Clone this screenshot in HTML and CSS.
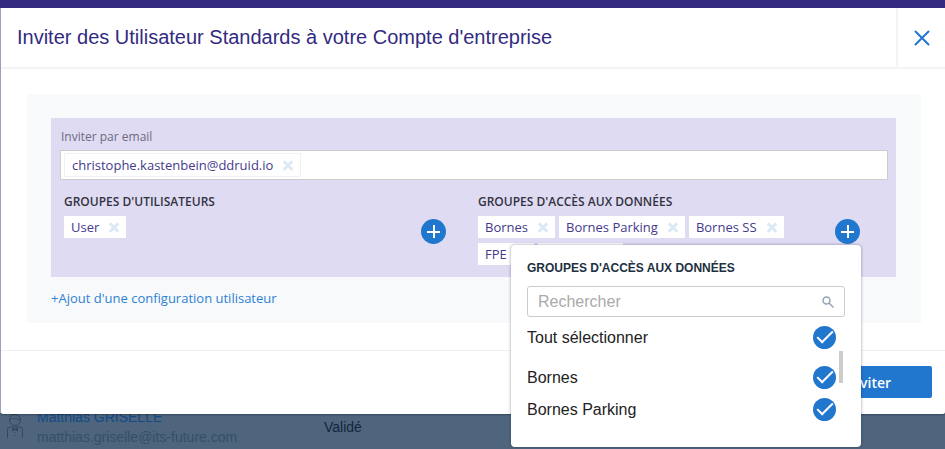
FILE: index.html
```html
<!DOCTYPE html>
<html lang="fr">
<head>
    <meta charset="UTF-8">
    <meta name="viewport" content="width=device-width, initial-scale=1.0">
    <title>Inviter des Utilisateurs</title>
    <link rel="stylesheet" href="styles.css">
</head>
<body>
    <div class="topbar"></div>

    <div class="user-row">
        <svg class="user-icon" width="18" height="26" viewBox="0 0 18 26" fill="none" stroke="currentColor">
            <circle cx="9" cy="7" r="5.5"/>
            <path d="M4 7c2-3 4 0 6-2 1 2 3 1 4 2M1.500 25v-8c0-2 1-3 3-3h9c2 0 3 1 3 3v8M9 19v1M9 22v1"/>
            <path d="M6.500 15v3L9 16.500l2.500 1.500v-3L9 16.500z" fill="currentColor"/>
        </svg>
        <div class="user-info">
            <a href="#" class="user-name">Matthias GRISELLE</a>
            <span class="user-email">matthias.griselle@its-future.com</span>
        </div>
        <span class="user-status">Validé</span>
    </div>

    <div class="modal" role="dialog" aria-labelledby="modalTitle">
        <div class="modal-header">
            <h1 id="modalTitle">Inviter des Utilisateur Standards à votre Compte d'entreprise</h1>
            <button class="close" aria-label="Fermer">
                <svg width="16" height="16" viewBox="0 0 16 16" stroke="currentColor" stroke-width="2" stroke-linecap="round"><path d="M1.500 1.500l13 13M14.500 1.500l-13 13"/></svg>
            </button>
        </div>

        <div class="modal-body">
            <div class="panel">
                <div class="card">
                    <label class="email-label" for="email">Inviter par email</label>
                    <div class="email-box">
                        <span class="tag tag-email">christophe.kastenbein@ddruid.io <button class="remove" aria-label="Retirer"></button></span>
                        <input type="text" id="email">
                    </div>
                    <div class="groups">
                        <div class="group">
                            <h2>GROUPES D'UTILISATEURS</h2>
                            <div class="group-row">
                                <div class="tags">
                                    <span class="tag">User <button class="remove" aria-label="Retirer"></button></span>
                                </div>
                                <button class="add" aria-label="Ajouter"></button>
                            </div>
                        </div>
                        <div class="group">
                            <h2>GROUPES D'ACCÈS AUX DONNÉES</h2>
                            <div class="group-row">
                                <div class="tags">
                                    <span class="tag">Bornes <button class="remove" aria-label="Retirer"></button></span>
                                    <span class="tag">Bornes Parking <button class="remove" aria-label="Retirer"></button></span>
                                    <span class="tag">Bornes SS <button class="remove" aria-label="Retirer"></button></span>
                                    <span class="tag">FPE <button class="remove" aria-label="Retirer"></button></span>
                                    <input type="text" class="tag-input" aria-label="Ajouter un groupe">
                                </div>
                                <button class="add" aria-label="Ajouter"></button>
                            </div>

                            <div class="popover">
                                <h3>GROUPES D'ACCÈS AUX DONNÉES</h3>
                                <div class="search">
                                    <input type="text" placeholder="Rechercher" aria-label="Rechercher">
                                    <svg width="12" height="12" viewBox="0 0 12 12" fill="none" stroke="currentColor" stroke-width="1.500"><circle cx="4.500" cy="4.500" r="3.500"/><path d="M7 7l4.500 4.500"/></svg>
                                </div>
                                <label class="option option-all">Tout sélectionner <input type="checkbox" checked></label>
                                <div class="options">
                                    <label class="option">Bornes <input type="checkbox" checked></label>
                                    <label class="option">Bornes Parking <input type="checkbox" checked></label>
                                    <div class="scroll-thumb"></div>
                                </div>
                            </div>
                        </div>
                    </div>
                </div>
                <a href="#" class="add-config">+Ajout d'une configuration utilisateur</a>
            </div>
        </div>

        <div class="modal-footer">
            <button class="invite">Inviter</button>
        </div>
    </div>
</body>
</html>
```
FILE: styles.css
```css
*, *::before, *::after {
    box-sizing: border-box;
}
body {
    margin: 0;
    min-height: 100vh;
    display: flex;
    flex-direction: column;
    justify-content: space-between;
    position: relative;
    overflow: hidden;
    background-color: #a9b0c6;
    font-family: "Liberation Sans", Arial, sans-serif;
    color: #222a35;
}
h1, h2, h3 {
    margin: 0;
}
button {
    border: none;
    padding: 0;
    cursor: pointer;
}
a {
    text-decoration: none;
}
.topbar {
    height: 8px;
    background-color: #322b80;
}

/* list behind the modal */
.user-row {
    display: flex;
    align-items: flex-end;
    height: 36px;
    padding: 0 6px 2px;
    background-color: #4e657d;
    font-size: 14px;
    line-height: 20px;
}
.user-icon {
    margin-bottom: 8px;
    color: #34495f;
}
.user-info {
    display: flex;
    flex-direction: column;
    width: 300px;
    padding-left: 13px;
}
.user-name {
    color: #134a85;
}
.user-email {
    color: #35506b;
}
.user-status {
    padding-bottom: 10px;
    color: #13253c;
}

.modal {
    position: absolute;
    top: 8px;
    left: 1px;
    right: 0;
    background-color: #fff;
    border-radius: 0 0 2px 2px;
    box-shadow: 0 1px 2px rgba(0, 0, 0, 0.3);
}
.modal-header {
    display: flex;
    justify-content: space-between;
    height: 61px;
    border-bottom: 2px solid #f4f4f5;
}
.modal-header h1 {
    padding-left: 16px;
    font-size: 20px;
    font-weight: normal;
    line-height: 59px;
    color: #322b80;
}
.close {
    display: flex;
    align-items: center;
    justify-content: center;
    width: 49px;
    background: none;
    border-left: 2px solid #f4f4f5;
    color: #2176cd;
}
.modal-body {
    padding: 25px 24px 27px 26px;
}
.panel {
    padding: 24px 25px 14px 24px;
    background-color: #f8f9fb;
    font-family: "Open Sans", "Noto Sans", sans-serif;
    font-size: 12px;
}
.card {
    padding: 9px 8px 12px 9px;
    background-color: #dfdbf3;
}
.email-label {
    display: block;
    padding-left: 1px;
    line-height: 20px;
    margin-bottom: 3px;
    color: #6c6b80;
}
.email-box {
    display: flex;
    gap: 4px;
    height: 30px;
    padding: 2px 3px;
    border: 1px solid #ccc;
    background-color: #fff;
}
.email-box input {
    flex: 1;
    min-width: 0;
    border: none;
    outline: none;
    font: inherit;
}
.groups {
    display: grid;
    grid-template-columns: 1fr 1fr;
}
.group {
    position: relative;
    padding: 12px 28px 0 4px;
}
.group h2 {
    font-size: 12px;
    font-weight: 600;
    line-height: 20px;
    margin-bottom: 4px;
    color: #33333f;
}
.group-row {
    display: flex;
    align-items: flex-start;
    justify-content: space-between;
    gap: 8px;
    min-height: 49px;
}
.tags {
    display: flex;
    flex-wrap: wrap;
    gap: 5px 4px;
    max-width: 340px;
}
.tag {
    display: flex;
    align-items: center;
    gap: 10px;
    height: 22px;
    padding: 0 7px;
    background-color: #fff;
    font-size: 13px;
    color: #443a8c;
}
.tag-email {
    height: 24px;
    border: 1px solid #f0f0f5;
}
.tag-input {
    width: 85px;
    height: 22px;
    border: none;
    background-color: #fff;
}
.remove {
    position: relative;
    width: 10px;
    height: 10px;
    background: none;
}
.remove::before,
.remove::after {
    content: "";
    position: absolute;
    top: 4px;
    left: -1px;
    width: 12px;
    height: 3px;
    background-color: #dbe8f5;
    transform: rotate(45deg);
}
.remove::after {
    transform: rotate(-45deg);
}
.add {
    position: relative;
    flex: none;
    width: 25px;
    height: 25px;
    margin-top: 3px;
    border-radius: 50%;
    background-color: #2176cd;
}
.add::before,
.add::after {
    content: "";
    position: absolute;
    background-color: #fff;
}
.add::before {
    top: 12px;
    left: 6px;
    width: 13px;
    height: 2px;
}
.add::after {
    top: 6px;
    left: 12px;
    width: 2px;
    height: 13px;
}
.add-config {
    display: inline-block;
    margin-top: 10px;
    font-size: 13px;
    line-height: 22px;
    color: #2d82d2;
}

/* dropdown with the data groups */
.popover {
    position: absolute;
    z-index: 1;
    top: 65px;
    right: 27px;
    width: 350px;
    padding: 13px 16px 22px;
    border-radius: 4px;
    background-color: #fff;
    box-shadow: 0 0 3px rgba(40, 40, 80, 0.5);
    font-family: "Liberation Sans", Arial, sans-serif;
    font-size: 16px;
    color: #222;
}
.popover h3 {
    font-size: 12px;
    line-height: 20px;
    margin-bottom: 8px;
    color: #22303f;
}
.search {
    display: flex;
    align-items: center;
    height: 31px;
    padding: 0 10px;
    border: 1px solid #ccc;
    border-radius: 3px;
    color: #93a5b5;
}
.search input {
    flex: 1;
    min-width: 0;
    padding: 0;
    border: none;
    outline: none;
    font: inherit;
}
.search input::placeholder {
    color: #aaa;
}
.option {
    display: flex;
    align-items: center;
    justify-content: space-between;
    height: 32px;
    padding-top: 1px;
    padding-right: 9px;
}
.option-all {
    margin: 4px 0 8px;
}
.option input {
    appearance: none;
    position: relative;
    width: 23px;
    height: 23px;
    margin: 0;
    border-radius: 50%;
    background-color: #2176cd;
}
.option input:checked::after {
    content: "";
    position: absolute;
    top: 5px;
    left: 4px;
    width: 16px;
    height: 8px;
    border-left: 2px solid #fff;
    border-bottom: 2px solid #fff;
    transform: rotate(-45deg);
}
.options {
    position: relative;
}
.scroll-thumb {
    position: absolute;
    top: -10px;
    right: 2px;
    width: 4px;
    height: 32px;
    background-color: #ccc;
}

.modal-footer {
    display: flex;
    justify-content: flex-end;
    padding: 15px 13px 16px;
    border-top: 1px solid #efeff1;
}
.invite {
    width: 126px;
    height: 32px;
    border-radius: 2px;
    background-color: #2176cd;
    color: #fff;
    font-family: "Open Sans", "Noto Sans", sans-serif;
    font-size: 14px;
    font-weight: 600;
}
```
